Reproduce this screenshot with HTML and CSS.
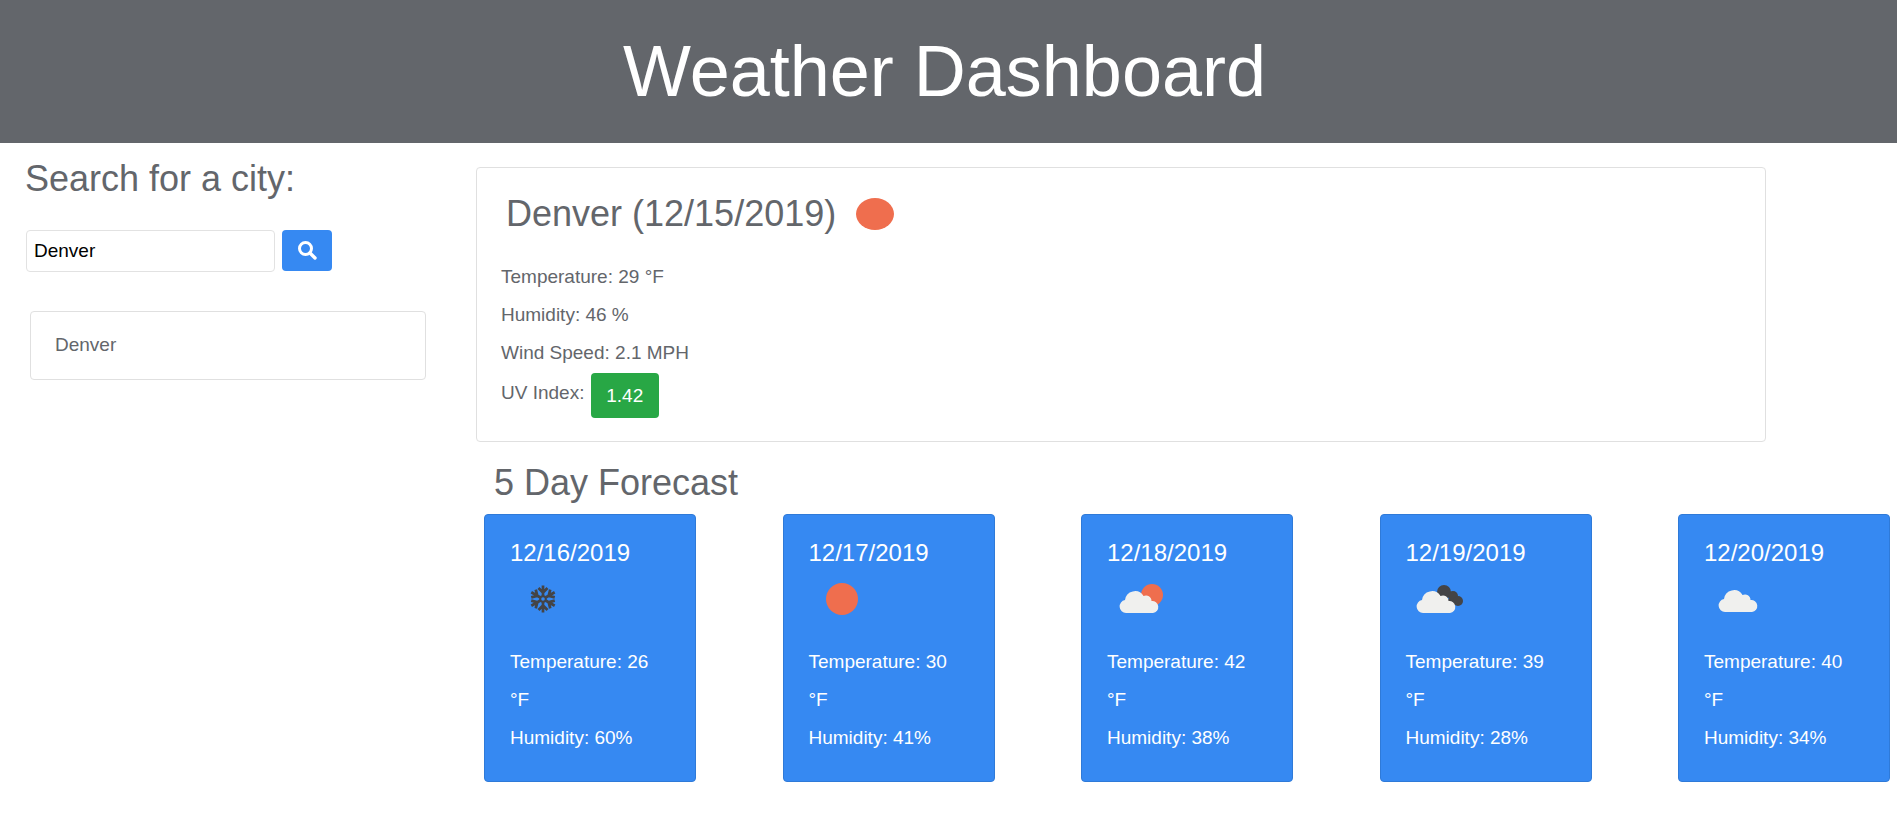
FILE: index.html
```html
<!DOCTYPE html>
<html lang="en">
  <head>
    <meta charset="UTF-8" />
    <meta name="viewport" content="width=device-width, initial-scale=1.0" />
    <title>Weather Dashboard</title>
    <link rel="stylesheet" href="styles.css">
  </head>
  <body>
    <header class="banner">
      <h1>Weather Dashboard</h1>
    </header>

    <div class="page">
      <aside class="sidebar">
        <h2 class="search-title">Search for a city:</h2>
        <form class="search-form">
          <input class="search-input" type="text" value="Denver" />
          <button class="search-btn" type="button" aria-label="Search">
            <svg viewBox="0 1 20 20" width="20" height="20">
              <circle cx="8.5" cy="8.5" r="6" fill="none" stroke="#fff" stroke-width="3" />
              <path d="M13 13l5 5" stroke="#fff" stroke-width="3.4" stroke-linecap="round" />
            </svg>
          </button>
        </form>
        <ul class="city-list">
          <li class="city-item">Denver</li>
        </ul>
      </aside>

      <main class="content">
        <section class="current">
          <div class="current-head">
            <h2 class="current-title">Denver (12/15/2019)</h2>
            <svg class="current-icon" viewBox="0 0 38 32" width="38" height="32">
              <ellipse cx="19" cy="16" rx="19" ry="16" fill="#ef6e4e" />
            </svg>
          </div>
          <p class="current-line">Temperature: 29 °F</p>
          <p class="current-line">Humidity: 46 %</p>
          <p class="current-line">Wind Speed: 2.1 MPH</p>
          <p class="current-line uv-line">UV Index: <span class="uv-badge">1.42</span></p>
        </section>

        <h2 class="forecast-title">5 Day Forecast</h2>
        <div class="forecast">
          <div class="day-card">
            <h3 class="day-date">12/16/2019</h3>
            <svg class="day-icon" viewBox="0 0 60 40">
              <g stroke="#444446" stroke-width="2.7" fill="none">
                <circle cx="30" cy="20" r="2.8" stroke-width="2" />
                <g id="arm">
                  <path d="M30 17V6.500M25.500 9l4.500 4.500 4.500-4.500" />
                </g>
                <use href="#arm" transform="rotate(60 30 20)" />
                <use href="#arm" transform="rotate(120 30 20)" />
                <use href="#arm" transform="rotate(180 30 20)" />
                <use href="#arm" transform="rotate(240 30 20)" />
                <use href="#arm" transform="rotate(300 30 20)" />
              </g>
            </svg>
            <p class="day-line">Temperature: 26 °F</p>
            <p class="day-line">Humidity: 60%</p>
          </div>

          <div class="day-card">
            <h3 class="day-date">12/17/2019</h3>
            <svg class="day-icon" viewBox="0 0 60 40">
              <circle cx="30" cy="20" r="16" fill="#ef6e4e" />
            </svg>
            <p class="day-line">Temperature: 30 °F</p>
            <p class="day-line">Humidity: 41%</p>
          </div>

          <div class="day-card">
            <h3 class="day-date">12/18/2019</h3>
            <svg class="day-icon" viewBox="0 0 60 40">
              <circle cx="42" cy="16" r="11" fill="#ef6e4e" />
              <path class="cloud" d="M16 34a6.500 6.500 0 0 1-1-12.900 10 10 0 0 1 18.500-4.100 5.500 5.500 0 0 1 8 5 6 6 0 0 1 1.500 12z" />
            </svg>
            <p class="day-line">Temperature: 42 °F</p>
            <p class="day-line">Humidity: 38%</p>
          </div>

          <div class="day-card">
            <h3 class="day-date">12/19/2019</h3>
            <svg class="day-icon" viewBox="0 0 60 40">
              <g fill="#444446">
                <circle cx="35" cy="13" r="7" />
                <circle cx="44" cy="17" r="5" />
                <circle cx="49" cy="22" r="5" />
                <path d="M30 20h18v6H30z" />
              </g>
              <path class="cloud" transform="translate(-2 0)" d="M16 34a6.500 6.500 0 0 1-1-12.900 10 10 0 0 1 18.500-4.100 5.500 5.500 0 0 1 8 5 6 6 0 0 1 1.500 12z" />
            </svg>
            <p class="day-line">Temperature: 39 °F</p>
            <p class="day-line">Humidity: 28%</p>
          </div>

          <div class="day-card">
            <h3 class="day-date">12/20/2019</h3>
            <svg class="day-icon" viewBox="0 0 60 40">
              <path class="cloud" transform="translate(2 -1)" d="M16 34a6.500 6.500 0 0 1-1-12.900 10 10 0 0 1 18.500-4.100 5.500 5.500 0 0 1 8 5 6 6 0 0 1 1.500 12z" />
            </svg>
            <p class="day-line">Temperature: 40 °F</p>
            <p class="day-line">Humidity: 34%</p>
          </div>
        </div>
      </main>
    </div>
  </body>
</html>
```

FILE: styles.css
```css
* {
  box-sizing: border-box;
}

body {
  font-family: "Liberation Sans", Arial, sans-serif;
  font-size: 19px;
  line-height: 24px;
  color: #63666b;
  background-color: #fff;
  margin: 0;
  overflow: hidden;
}

h1,
h2,
h3,
p,
ul {
  margin: 0;
  padding: 0;
  font-weight: normal;
}

.banner {
  height: 143px;
  padding-right: 8px;
  background-color: #63666b;
  color: #fff;
  text-align: center;
}

.banner h1 {
  font-size: 72px;
  line-height: 143px;
}

.page {
  display: flex;
}

.sidebar {
  width: 476px;
  padding: 14px 0 0 25px;
}

.search-title {
  font-size: 36px;
  line-height: 44px;
  margin-bottom: 29px;
}

.search-form {
  display: flex;
  gap: 7px;
}

.search-input {
  width: 249px;
  height: 42px;
  margin-left: 1px;
  padding: 0 7px;
  font-family: inherit;
  font-size: 19px;
  color: #000;
  border: 1px solid #e2e2e2;
  border-radius: 4px;
}

.search-btn {
  display: flex;
  align-items: center;
  justify-content: center;
  width: 50px;
  height: 41px;
  padding: 0;
  background-color: #3689f2;
  border: none;
  border-radius: 4px;
}

.city-list {
  list-style: none;
  margin: 39px 0 0 5px;
  width: 396px;
}

.city-item {
  height: 69px;
  padding: 21px 0 0 24px;
  border: 1px solid #e0e0e0;
  border-radius: 4px;
}

.content {
  flex: 1;
  padding-top: 24px;
}

.current {
  width: 1290px;
  height: 275px;
  padding: 24px 24px 0;
  border: 1px solid #e0e0e0;
  border-radius: 4px;
}

.current-head {
  display: flex;
  align-items: center;
  gap: 20px;
  margin: 0 0 29px 5px;
}

.current-title {
  font-size: 36px;
  line-height: 44px;
}

.current-line {
  margin-bottom: 14px;
}

.uv-line {
  margin-top: -6px;
  margin-bottom: 0;
}

.uv-badge {
  display: inline-block;
  width: 68px;
  height: 45px;
  margin-left: 1px;
  line-height: 45px;
  vertical-align: -3px;
  text-align: center;
  color: #fff;
  background-color: #28a745;
  border-radius: 4px;
}

.forecast-title {
  font-size: 36px;
  line-height: 44px;
  margin: 19px 0 9px 18px;
}

.forecast {
  display: flex;
  gap: 86.5px;
  margin-left: 8px;
}

.day-card {
  flex: none;
  width: 212px;
  height: 268px;
  padding: 22px 0 0 25px;
  color: #fff;
  background-color: #3689f2;
  border: 1px solid #2f7ad8;
  border-radius: 4px;
}

.day-date {
  font-size: 24px;
  line-height: 32px;
}

.day-icon {
  display: block;
  width: 60px;
  height: 40px;
  margin: 10px 0 24px 3px;
}

.day-line {
  width: 160px;
  line-height: 38px;
}

.cloud {
  fill: #f0f0ee;
}
```
